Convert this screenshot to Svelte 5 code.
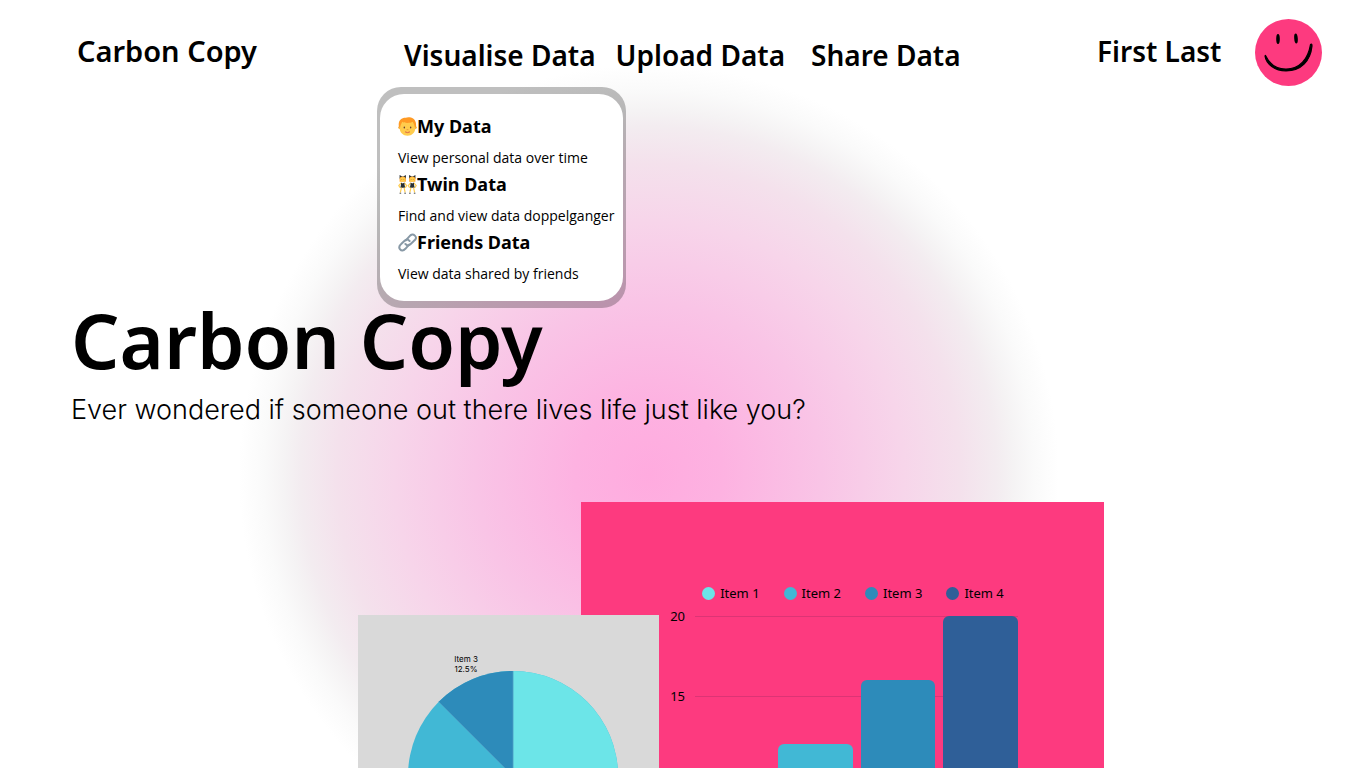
<script>
  const bars = [
    { name: 'Item 1', value: 8, color: '#6ce5e8' },
    { name: 'Item 2', value: 12, color: '#41b8d5' },
    { name: 'Item 3', value: 16, color: '#2d8bba' },
    { name: 'Item 4', value: 20, color: '#2f5f98' }
  ];
  const ticks = [20, 15, 10, 5];
  const max = 20;
  let open = $state(true);
</script>

<div class="page">
  <header>
    <a class="brand" href="#home">Carbon Copy</a>
    <nav>
      <div class="menu-anchor">
        <button type="button" aria-expanded={open} onclick={() => (open = !open)}>Visualise Data</button>
        {#if open}
          <div class="menu">
            <ul>
              <li>
                <a href="#my-data">
                  <span class="title">
                    <svg viewBox="0 0 36 36" aria-hidden="true">
                      <circle cx="3" cy="20" r="2.6" fill="#f2a93b" />
                      <circle cx="33" cy="20" r="2.6" fill="#f2a93b" />
                      <path d="M3 14Q5 5 18 5T33 14V20C33 30 26 35.5 18 35.5S3 30 3 20Z" fill="#ffcc4d" />
                      <path d="M2 19C-1 8 6 1 15 1.5C19-1 37 0 34 19L32 20C31 15 30 13 28 9C23 12 12 12 8 9C6 13 5 15 4 20Z" fill="#ff9a24" />
                      <ellipse cx="12" cy="20" rx="1.4" ry="2" fill="#664030" />
                      <ellipse cx="24" cy="20" rx="1.4" ry="2" fill="#664030" />
                      <path d="M17 24h2" stroke="#e58a35" stroke-width="1.4" stroke-linecap="round" />
                      <path d="M14 28.5Q18 31 22 28.5" fill="none" stroke="#d65d48" stroke-width="1.8" stroke-linecap="round" />
                    </svg>My Data
                  </span>
                  <span class="note">View personal data over time</span>
                </a>
              </li>
              <li>
                <a href="#twin-data">
                  <span class="title">
                    <svg viewBox="0 0 36 36" aria-hidden="true">
                      {#each [0, 18] as x}
                        <g transform="translate({x} 0)">
                          <path d="M3 7L3 0L8 3H10L15 0V7Z" fill="#292f33" />
                          <path d="M3 13V8Q3 3 9 3T15 8V13Z" fill="#ffac33" />
                          <circle cx="9" cy="8.5" r="4.4" fill="#ffcc4d" />
                          <path d="M7 8v1M11 8v1" stroke="#664500" stroke-width="1" />
                          <path d="M6 15L1.5 20L4 24M12 15L16.5 20L14 24" fill="none" stroke="#ffcc4d" stroke-width="2.2" />
                          <path d="M6 14L9 16L12 14L12.5 19L13.5 24H4.5L5.5 19Z" fill="#292f33" />
                          <path d="M6.5 24L4.5 33M11.5 24L13.5 33" stroke="#ffcc4d" stroke-width="2.2" />
                          <path d="M3 34.5h3M12 34.5h3" stroke="#292f33" stroke-width="1.6" />
                        </g>
                      {/each}
                    </svg>Twin Data
                  </span>
                  <span class="note">Find and view data doppelganger</span>
                </a>
              </li>
              <li>
                <a href="#friends-data">
                  <span class="title">
                    <svg viewBox="0 0 36 36" aria-hidden="true">
                      <g fill="none" stroke="#8899a6" stroke-width="3.8" stroke-linecap="round" stroke-linejoin="round">
                        <path d="M15 14L22 6Q27 0 32 5T30 15L24 21Q19 26 14 21" />
                        <path d="M21 22L14 30Q8 36 4 31T6 21L12 15Q17 10 22 15" />
                      </g>
                    </svg>Friends Data
                  </span>
                  <span class="note">View data shared by friends</span>
                </a>
              </li>
            </ul>
          </div>
        {/if}
      </div>
      <a href="#upload">Upload Data</a>
      <a class="share" href="#share">Share Data</a>
    </nav>
    <a class="user" href="#profile">
      <span>First Last</span>
      <svg viewBox="0 0 67 67" aria-hidden="true">
        <circle cx="33.5" cy="33.5" r="33.5" fill="#fd3a7f" />
        <ellipse cx="23" cy="20" rx="1.8" ry="5" />
        <ellipse cx="41" cy="19.5" rx="1.8" ry="5" transform="rotate(-5 41 19.5)" />
        <path d="M10.5 36.5C15 46 22 50 31 50C45 50 53 40 55.5 25.5Q57 24 57 27C55.5 42 46 52 31 52C20 52 11 45 10 37Z" stroke="#000" stroke-width="1.2" stroke-linejoin="round" />
      </svg>
    </a>
  </header>

  <main>
    <section class="hero">
      <h1>Carbon Copy</h1>
      <p>Ever wondered if someone out there lives life just like you?</p>
    </section>

    <section class="charts">
      <div class="bar-card">
        <ul class="legend">
          {#each bars as bar}
            <li><i style="background: {bar.color}"></i>{bar.name}</li>
          {/each}
        </ul>
        <div class="plot">
          <div class="scale">
            {#each ticks as tick}
              <div class="tick"><span>{tick}</span></div>
            {/each}
          </div>
          <div class="bars">
            {#each bars as bar}
              <div class="bar" style="height: {(bar.value / max) * 100}%; background: {bar.color}"></div>
            {/each}
          </div>
        </div>
      </div>
      <div class="pie-card">
        <p class="slice-label">Item 3<br />12.5%</p>
        <svg viewBox="0 0 210 210" aria-hidden="true">
          <circle cx="105" cy="105" r="105" fill="#41b8d5" />
          <path d="M105 105V0A105 105 0 0 1 105 210Z" fill="#6ce5e8" />
          <path d="M105 105L30.75 30.75A105 105 0 0 1 105 0Z" fill="#2d8bba" />
          <path d="M30.75 30.75L105 105V0" fill="none" stroke="#4b9dc4" stroke-width="0.8" />
        </svg>
      </div>
    </section>
  </main>
</div>

<style>
  :global(body) {
    margin: 0;
    background: #fff;
  }
  .page {
    display: flex;
    flex-direction: column;
    height: 100vh;
    overflow: hidden;
    color: #000;
    font-family: 'Noto Sans', 'Open Sans', sans-serif;
    background: radial-gradient(
      circle 410px at 47.5% 475px,
      #ffabdf 0%,
      #fdb2e1 18%,
      #f9c4e6 42%,
      #f7d5ea 62%,
      #f4e1ec 76%,
      #f3ecf0 85%,
      #f5f3f4 89%,
      #fafafa 94%,
      #fff 100%
    );
  }
  a {
    color: inherit;
    text-decoration: none;
  }
  ul {
    list-style: none;
    margin: 0;
    padding: 0;
  }
  header {
    display: grid;
    grid-template-columns: 327fr 693fr 225fr;
    padding: 19px 44px 0 77px;
    font-size: 28px;
    line-height: 40px;
    font-weight: 600;
    white-space: nowrap;
  }
  .brand {
    padding-top: 12px;
    font-size: 29px;
  }
  nav {
    display: flex;
    align-items: flex-start;
    gap: 20px;
    padding-top: 16px;
  }
  nav button {
    display: block;
    border: 0;
    padding: 0;
    background: none;
    color: inherit;
    font: inherit;
    cursor: pointer;
  }
  .share {
    margin-left: 6px;
  }
  .menu-anchor {
    position: relative;
  }
  .menu {
    position: absolute;
    z-index: 2;
    top: 52px;
    left: -27px;
    padding: 7px 3px;
    border-radius: 24px;
    background: rgba(0, 0, 0, 0.25);
  }
  .menu ul {
    width: 225px;
    padding: 18px 0 15px 18px;
    border-radius: 24px;
    background: #fff;
  }
  .menu li a {
    display: block;
    height: 58px;
  }
  .title {
    display: flex;
    align-items: center;
    font-size: 18px;
    line-height: 28px;
    font-weight: 700;
  }
  .title svg {
    width: 19px;
    height: 19px;
  }
  .note {
    display: block;
    padding-top: 8px;
    font-family: 'Open Sans', sans-serif;
    font-size: 14px;
    line-height: 20px;
    font-weight: 400;
  }
  .user {
    display: flex;
    align-items: flex-start;
    justify-content: space-between;
  }
  .user span {
    padding-top: 12px;
  }
  .user svg {
    width: 67px;
    height: 67px;
  }
  main {
    flex: 1;
    display: flex;
    flex-direction: column;
    min-height: 0;
  }
  .hero {
    padding: 204px 71px 0;
  }
  h1 {
    margin: 0;
    font-size: 76px;
    line-height: 100px;
    font-weight: 600;
  }
  .hero p {
    margin: 0;
    padding-top: 2px;
    font-family: Inter, sans-serif;
    font-size: 27px;
    line-height: 36px;
    font-weight: 300;
  }
  .charts {
    flex: 1;
    display: grid;
    grid-template-columns: minmax(0, 358fr) minmax(0, 223fr) minmax(0, 78fr) minmax(0, 445fr) minmax(0, 262fr);
    align-items: start;
    padding-top: 74px;
  }
  .bar-card {
    grid-column: 3 / 5;
    grid-row: 1;
    padding: 81px 86px 40px 87px;
    background: #fd3a7f;
    font-size: 13px;
    line-height: 20px;
  }
  .legend {
    display: flex;
    justify-content: center;
    gap: 24px;
    padding-left: 20px;
  }
  .legend li {
    display: flex;
    align-items: center;
    gap: 5px;
    white-space: nowrap;
  }
  .legend i {
    width: 13px;
    height: 13px;
    border-radius: 50%;
  }
  .plot {
    display: grid;
    padding-top: 13px;
  }
  .scale,
  .bars {
    grid-area: 1 / 1;
  }
  .tick {
    display: flex;
    align-items: flex-start;
    height: 80px;
  }
  .tick span {
    width: 17px;
    margin-top: -7px;
    line-height: 14px;
    text-align: right;
  }
  .tick::after {
    content: '';
    flex: 1;
    height: 1px;
    margin-left: 10px;
    background: #dc3475;
  }
  .bars {
    display: grid;
    grid-template-columns: repeat(4, 1fr);
    gap: 8px;
    align-items: end;
    padding-left: 27px;
  }
  .bar {
    border-radius: 6px 6px 0 0;
  }
  .pie-card {
    grid-column: 2 / 4;
    grid-row: 1;
    z-index: 1;
    margin-top: 113px;
    padding: 39px 41px 60px 50px;
    background: #d9d9d9;
  }
  .pie-card svg {
    display: block;
    width: 100%;
  }
  .slice-label {
    width: 116px;
    margin: 0 0 -3px;
    font-family: Inter, sans-serif;
    font-size: 8px;
    line-height: 10px;
    text-align: center;
  }
</style>
